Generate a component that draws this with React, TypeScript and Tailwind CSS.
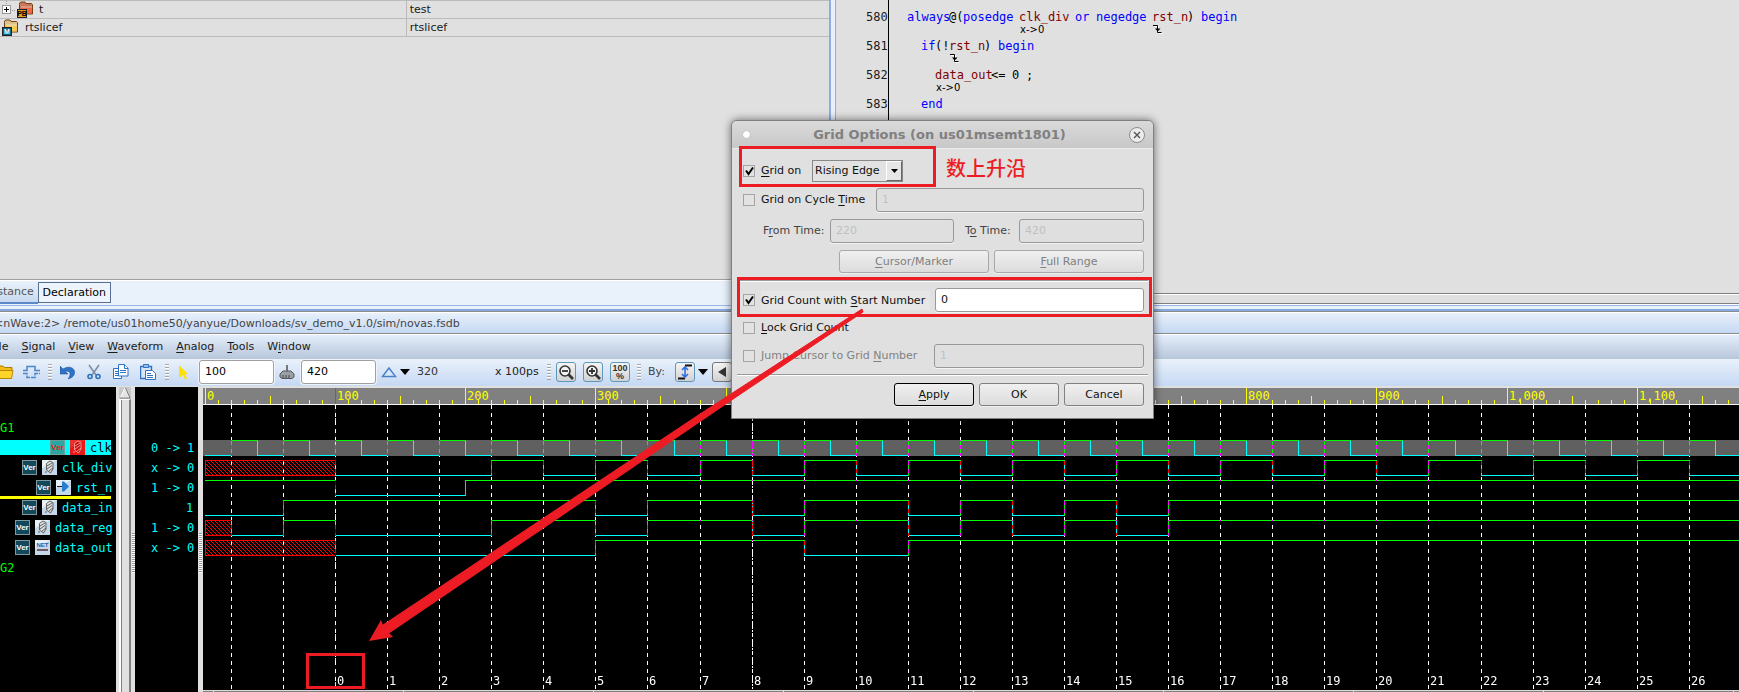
import type { ReactNode } from 'react'

type Token = { text: string; color?: string; note?: string; edge?: boolean }
type Level = 'x' | '0' | '1'
type Signal = {
  name: string
  value: string
  kind: 'reg' | 'input' | 'net'
  wave: [number, Level][]
}

const CELL = 7
const END = 1200

const codeLines: { no: number; indent: number; tokens: Token[] }[] = [
  {
    no: 580,
    indent: 0,
    tokens: [
      { text: 'always', color: 'text-[#0000ff]' },
      { text: '@(' },
      { text: 'posedge ', color: 'text-[#0000ff]' },
      { text: 'clk_div ', color: 'text-[#800000]', note: 'x->0' },
      { text: 'or ', color: 'text-[#0000ff]' },
      { text: 'negedge ', color: 'text-[#0000ff]' },
      { text: 'rst_n', color: 'text-[#800000]', edge: true },
      { text: ') ' },
      { text: 'begin', color: 'text-[#0000ff]' },
    ],
  },
  {
    no: 581,
    indent: 2,
    tokens: [
      { text: 'if', color: 'text-[#0000ff]' },
      { text: '(!' },
      { text: 'rst_n', color: 'text-[#800000]', edge: true },
      { text: ') ' },
      { text: 'begin', color: 'text-[#0000ff]' },
    ],
  },
  {
    no: 582,
    indent: 4,
    tokens: [
      { text: 'data_out', color: 'text-[#800000]', note: 'x->0' },
      { text: '<= ' },
      { text: '0 ' },
      { text: ';' },
    ],
  },
  { no: 583, indent: 2, tokens: [{ text: 'end', color: 'text-[#0000ff]' }] },
]

// level changes as [time, new level]
const clkWave: [number, Level][] = [[0, '0']]
for (let t = 20; t < END; t += 20) clkWave.push([t, (t / 20) % 2 ? '1' : '0'])

const divWave: [number, Level][] = [[0, 'x'], [100, '0']]
for (let t = 220; t < END; t += 40) divWave.push([t, ((t - 220) / 40) % 2 ? '0' : '1'])

const dataTail: [number, Level][] = [
  [300, '0'], [340, '1'], [420, '0'], [460, '1'], [540, '0'],
  [580, '1'], [620, '0'], [660, '1'], [700, '0'], [740, '1'],
]

const signals: Signal[] = [
  { name: 'clk', value: '0 -> 1', kind: 'reg', wave: clkWave },
  { name: 'clk_div', value: 'x -> 0', kind: 'reg', wave: divWave },
  { name: 'rst_n', value: '1 -> 0', kind: 'input', wave: [[0, '1'], [100, '0'], [200, '1']] },
  { name: 'data_in', value: '1', kind: 'reg', wave: [[0, '0'], [60, '1'], ...dataTail] },
  {
    name: 'data_reg',
    value: '1 -> 0',
    kind: 'reg',
    wave: [[0, 'x'], [20, '0'], [60, '1'], [100, '0'], [220, '1'], ...dataTail],
  },
  {
    name: 'data_out',
    value: 'x -> 0',
    kind: 'net',
    wave: [[0, 'x'], [100, '0'], [300, '1'], [460, '0'], [540, '1']],
  },
]

const menus = [
  ['', 'F', 'ile'],
  ['', 'S', 'ignal'],
  ['', 'V', 'iew'],
  ['', 'W', 'aveform'],
  ['', 'A', 'nalog'],
  ['', 'T', 'ools'],
  ['W', 'i', 'ndow'],
]

// time to pixel column inside the wave pane
const px = (t: number) => Math.floor(2.4 + t * 1.3017)

function Mono({ text }: { text: string }) {
  return (
    <span className="inline-block whitespace-pre font-['DejaVu_Sans_Mono',monospace] text-[12px]" style={{ width: text.length * CELL }}>
      {text}
    </span>
  )
}

/* ---------- source browser ---------- */

function FolderIcon({ tag, front, back, badge, ink }: { tag: string; front: string; back: string; badge: string; ink: string }) {
  return (
    <svg width="17" height="17" viewBox="0 0 17 17" className="shrink-0">
      <path d="M2.500 3.500V2L4 1h4l1 1.500h5.500l1 1v9.500h-13z" fill={back} stroke="#7a3f10" />
      <path d="M4 6.500h10.500v6H4z" fill={front} />
      <path d="M4 6h11" stroke="#fff" strokeOpacity=".5" />
      <rect x=".5" y="8.500" width="9" height="8" fill={badge} stroke="#222" />
      <text x="5" y="15" fontSize="7" fontWeight="bold" fill={ink} textAnchor="middle" fontFamily="Liberation Sans, sans-serif">
        {tag}
      </text>
    </svg>
  )
}

function InstanceTree() {
  return (
    <table className="w-full table-fixed border-collapse">
      <tbody>
        <tr className="h-[18px] border-y border-[#bbb]">
          <td className="w-[49%] border-r border-[#bbb] p-0">
            <div className="flex h-[17px] items-center overflow-hidden pl-[2px]">
              <svg width="15" height="17" viewBox="0 0 15 17">
                <path d="M4.500 0v4M10 9.500h4" stroke="#999" strokeDasharray="1 1" />
                <rect x=".5" y="4.500" width="8" height="8" fill="#fff" stroke="#999" />
                <path d="M2 8.500h5M4.500 6v5" stroke="#000" />
              </svg>
              <FolderIcon tag="PB" front="#ee6a45" back="#c8785a" badge="#e0a020" ink="#000" />
              <span className="pl-[5px]">t</span>
            </div>
          </td>
          <td className="p-0 pl-[3px]">test</td>
        </tr>
        <tr className="h-[18px] border-b border-[#bbb]">
          <td className="border-r border-[#bbb] p-0">
            <div className="flex h-[17px] items-center overflow-hidden pl-[2px]">
              <FolderIcon tag="M" front="#f5cc50" back="#dcc08a" badge="#0a6488" ink="#fff" />
              <span className="pl-[6px]">rtslicef</span>
            </div>
          </td>
          <td className="p-0 pl-[3px]">rtslicef</td>
        </tr>
      </tbody>
    </table>
  )
}

function SourcePane() {
  return (
    <div className="flex min-w-0 flex-col overflow-hidden">
      <div className="flex h-[293px] shrink-0">
        <div className="w-[53px] shrink-0 border-r border-black pt-[10px] pr-px text-right">
          {codeLines.map((line) => (
            <div key={line.no} className="h-[29px] leading-[14px]">
              <Mono text={String(line.no)} />
            </div>
          ))}
        </div>
        <div className="pt-[10px] pl-[18px]">
          {codeLines.map((line) => (
            <div key={line.no} className="flex h-[29px] items-start leading-[14px]">
              <Mono text={' '.repeat(line.indent)} />
              {line.tokens.map((token, i) => (
                <div key={i} className={`flex flex-col ${token.color ?? 'text-black'}`}>
                  <Mono text={token.text} />
                  {token.note && <span className="pl-px text-[10px] leading-[12px] text-black">{token.note}</span>}
                  {token.edge && (
                    <svg width="10" height="10" viewBox="0 0 10 10" className="ml-[1px]">
                      <path d="M1 2.500h4.500v7h4" fill="none" stroke="#fff" />
                      <path d="M0 1.500h4.500v7h4" fill="none" stroke="#000" />
                      <path d="M2 4.500h5.500L4.800 7.500z" />
                    </svg>
                  )}
                </div>
              ))}
            </div>
          ))}
        </div>
      </div>
      <div className="h-[11px] border-y border-[#808080] bg-[#e0e0e0] shadow-[inset_0_1px_#fff]" />
      <div className="h-px bg-white" />
    </div>
  )
}

/* ---------- toolbar ---------- */

function Grip() {
  return (
    <svg width="4" height="16" viewBox="0 0 4 16" className="shrink-0">
      <path d="M0 .5h4M0 3.500h4M0 6.500h4M0 9.500h4M0 12.500h4M0 15.500h4" stroke="#a8a8a8" />
      <path d="M0 1.500h4M0 4.500h4M0 7.500h4M0 10.500h4M0 13.500h4" stroke="#fff" />
    </svg>
  )
}

function ToolButton({ label, framed, className = '', children }: { label: string; framed?: boolean; className?: string; children: ReactNode }) {
  const frame = framed
    ? 'h-[20px] w-[20px] rounded-[3px] border border-[#5f97ba] bg-gradient-to-b from-[#f4f4f4] to-[#d2d2d2]'
    : 'h-[18px]'
  return (
    <button type="button" aria-label={label} className={`flex shrink-0 items-center justify-center ${frame} ${className}`}>
      {children}
    </button>
  )
}

function Caret() {
  return (
    <svg width="10" height="6" viewBox="0 0 10 6">
      <path d="M0 0h10L5 6z" />
    </svg>
  )
}

function Magnifier({ plus }: { plus?: boolean }) {
  return (
    <svg width="16" height="16" viewBox="0 0 16 16" fill="none" stroke="#333">
      <circle cx="7" cy="7" r="5" strokeWidth="1.600" fill="#f4f4f4" />
      <path d="M10.500 10.500l4.500 4.500" strokeWidth="2.600" />
      <path d={plus ? 'M4 7h6M7 4v6' : 'M4 7h6'} strokeWidth="1.800" />
    </svg>
  )
}

function Toolbar() {
  const field =
    'h-[24px] w-[75px] shrink-0 rounded-[3px] border border-[#a0a0a0] bg-white px-[5px] pb-[2px] text-black shadow-[0_0_0_1px_#eef4fb]'
  return (
    <div className="flex h-[27px] items-center bg-gradient-to-b from-[#eaf2fb] to-[#c5d8f3] pb-px">
      <ToolButton label="Open">
        <svg width="14" height="16" viewBox="0 0 14 16">
          <path d="M-3 2h6l1.500 1.500H12V7H-3z" fill="#f3bd12" stroke="#b07a00" />
          <path d="M-3 14.500V6.500h16l-1.500 8z" fill="#ffd428" stroke="#b88600" />
        </svg>
      </ToolButton>
      <ToolButton label="Get signals" className="ml-[9px]">
        <svg width="17" height="16" viewBox="0 0 17 16" fill="none" stroke="#4a86c6" strokeWidth="1.500">
          <path d="M0 6.500h4V2.500h8v4h5" />
          <path d="M0 9.500h4v4h8v-4h5" strokeDasharray="5 1" />
        </svg>
      </ToolButton>
      <span className="pl-[8px]"><Grip /></span>
      <ToolButton label="Undo" className="ml-[8px]">
        <svg width="15" height="15" viewBox="0 0 15 15">
          <path d="M0 1v8h8L5.500 6.500c3-1 5 .5 4.500 3.500-.2 1.500-1 2.800-2 4 4-1 7-3.500 6.500-7.500C14 2.500 8.500.5 3 4z" fill="#2f74c4" stroke="#1d56a0" strokeWidth=".6" />
        </svg>
      </ToolButton>
      <ToolButton label="Cut" className="ml-[12px]">
        <svg width="14" height="16" viewBox="0 0 14 16" fill="none">
          <path d="M2 1l7 10M12 1L5 11" stroke="#7d90aa" strokeWidth="1.600" />
          <circle cx="3" cy="12.500" r="2" stroke="#2f6fbe" strokeWidth="1.600" />
          <circle cx="11" cy="12.500" r="2" stroke="#2f6fbe" strokeWidth="1.600" />
        </svg>
      </ToolButton>
      <ToolButton label="Copy" className="ml-[12px]">
        <svg width="16" height="16" viewBox="0 0 16 16" fill="#fff" stroke="#2f74c4">
          <path d="M.5 4.500h8v10h-8z" />
          <path d="M2 7.500h4M2 9.500h4M2 11.500h4" />
          <path d="M5.500.5h6l3.500 3.500v8H5.500z" />
          <path d="M11.500.5v4H15M7 6.500h6M7 8.500h6" />
        </svg>
      </ToolButton>
      <ToolButton label="Paste" className="ml-[11px]">
        <svg width="16" height="16" viewBox="0 0 16 16" fill="#d8e6f6" stroke="#2f74c4">
          <path d="M.5 2.500h11v12H.5z" strokeWidth="1.400" />
          <path d="M3.500.5h5v3h-5z" fill="#9cc0ea" />
          <path d="M5.500 6.500h7l3 3v6h-10z" fill="#fff" />
          <path d="M7 9.500h4M7 11.500h6M7 13.500h6" />
        </svg>
      </ToolButton>
      <span className="pl-[9px]"><Grip /></span>
      <ToolButton label="Select" className="ml-[10px]">
        <svg width="10" height="16" viewBox="0 0 10 16">
          <path d="M0 1l9 9H6l2 4.500-2 1L4 11l-4 3z" fill="#ffe000" />
        </svg>
      </ToolButton>
      <input aria-label="Cursor time" defaultValue="100" className={`ml-[10px] ${field}`} />
      <ToolButton label="Marker" className="ml-[5px]">
        <svg width="16" height="16" viewBox="0 0 16 16">
          <path d="M7 1h2v7H7z" fill="#777" />
          <path d="M1 10l3-3h8l3 3v3l-2 1.500H3L1 13z" fill="#9aa0a6" stroke="#555" />
          <path d="M4 11v3M7 11v3M10 11v3" stroke="#444" />
        </svg>
      </ToolButton>
      <input aria-label="Marker time" defaultValue="420" className={`ml-[6px] ${field}`} />
      <ToolButton label="Delta" className="ml-[5px]">
        <svg width="16" height="12" viewBox="0 0 16 12">
          <path d="M1.500 10.500L8 2l6.500 8.500z" fill="#d8e8fa" stroke="#4a7fc8" strokeWidth="1.400" />
        </svg>
      </ToolButton>
      <ToolButton label="Delta menu" className="ml-[3px]"><Caret /></ToolButton>
      <span className="w-[79px] shrink-0 pl-[7px] text-[#333]">320</span>
      <span className="w-[58px] shrink-0 pl-[6px] text-[#222]">x 100ps</span>
      <Grip />
      <ToolButton label="Zoom out" framed className="ml-[5px]"><Magnifier /></ToolButton>
      <ToolButton label="Zoom in" framed className="ml-[7px]"><Magnifier plus /></ToolButton>
      <ToolButton label="Zoom to 100%" framed className="ml-[7px] flex-col font-['Liberation_Sans',sans-serif] text-[9px] leading-[8px] font-bold text-[#333]">
        <span>100</span>
        <span>%</span>
      </ToolButton>
      <span className="pl-[7px]"><Grip /></span>
      <span className="w-[34px] shrink-0 pl-[7px] text-[#444]">By:</span>
      <ToolButton label="Search by edge" framed className="bg-white">
        <svg width="16" height="16" viewBox="0 0 16 16">
          <path d="M8 1.500h7M1 14.500h7" stroke="#111" strokeWidth="2" />
          <path d="M8 4v8M5 6l3-3 3 3M5 10l3 3 3-3" stroke="#2f6fe0" strokeWidth="1.600" fill="none" />
        </svg>
      </ToolButton>
      <ToolButton label="Search menu" className="ml-[3px]"><Caret /></ToolButton>
      <ToolButton label="Previous" framed className="ml-[4px] border-[#777]">
        <svg width="9" height="10" viewBox="0 0 9 10"><path d="M8 0v10L0 5z" fill="#333" /></svg>
      </ToolButton>
    </div>
  )
}

/* ---------- wave pane ---------- */

function VerIcon({ active }: { active: boolean }) {
  return (
    <svg width="15" height="15" viewBox="0 0 15 15" className="shrink-0">
      <rect x=".5" y=".5" width="14" height="14" fill={active ? '#2aa5a0' : '#12485a'} stroke={active ? '#6f9d9a' : '#7d98a0'} />
      <text x="7.500" y="10" fontSize="8" fontWeight="bold" textAnchor="middle" fontFamily="Liberation Sans, sans-serif" fill={active ? '#f01818' : '#fff'}>
        Ver
      </text>
    </svg>
  )
}

function KindIcon({ kind, active }: { kind: Signal['kind']; active: boolean }) {
  return (
    <svg width="15" height="15" viewBox="0 0 15 15" className="shrink-0">
      <rect width="15" height="15" fill={active ? '#e81818' : '#c4d8ea'} />
      <path d="M0 0h15L0 8z" fill="#fff" fillOpacity={active ? 0.1 : 0.6} />
      {kind === 'reg' && (
        <g stroke={active ? '#ffb0a8' : '#444'} fill={active ? '#c81010' : '#ddd'} strokeWidth=".8">
          <path d="M5 3l3-2 3 1.500v6.500L8.500 13 4.500 10V3.500z" />
          <path d="M5 6l5-3M5 9l5-3.500M7 11l4-3M3 12h2" />
        </g>
      )}
      {kind === 'input' && (
        <g>
          <path d="M1 6.500h6" stroke="#222" />
          <path d="M6 1.500h2l5 5-5 5H6z" fill="#2a7cd0" />
        </g>
      )}
      {kind === 'net' && (
        <g>
          <text x="7.500" y="7" fontSize="6" fontWeight="bold" textAnchor="middle" fill="#2a62b0" fontFamily="Liberation Sans, sans-serif">NET</text>
          <path d="M2 10h11" stroke="#5a3038" strokeWidth="1.500" />
        </g>
      )}
    </svg>
  )
}

function SignalList() {
  return (
    <div className="w-[116px] shrink-0 overflow-hidden bg-black pr-[5px] text-[#00ffff]">
      <div className="mt-[33px] h-[20px] leading-[16px] text-[#00ff00]"><Mono text="G1" /></div>
      {signals.map((signal, i) => (
        <div key={signal.name} className="h-[20px]">
          <div className={`flex h-[15px] justify-end gap-[5px] leading-[17px] ${i === 0 ? 'bg-[#00ffff] text-black' : ''}`}>
            <VerIcon active={i === 0} />
            <KindIcon kind={signal.kind} active={i === 0} />
            <Mono text={signal.name} />
          </div>
          {/* insertion marker */}
          {signal.name === 'rst_n' && <div className="mt-[1px] h-[3px] bg-[#ffff00]" />}
        </div>
      ))}
      <div className="leading-[16px] text-[#00ff00]"><Mono text="G2" /></div>
    </div>
  )
}

function SplitterGrip() {
  return (
    <div className="mt-[146px] h-[40px] w-[3px] bg-[repeating-linear-gradient(#999_0_1px,#fff_1px_2px)]" />
  )
}

function tracePath(wave: Signal['wave'], level: Level, top: number) {
  let d = ''
  wave.forEach(([start, value], i) => {
    if (value !== level) return
    const from = px(start)
    const to = px(wave[i + 1]?.[0] ?? 2 * END)
    const y = (value === '1' ? top : top + 15) + 0.5
    // the edge takes the colour of the level it arrives at
    if (i > 0) d += `M${from + 0.5} ${top}v16`
    d += `M${from} ${y}H${to + 1}`
  })
  return d
}

function Ruler() {
  const ticks = []
  for (let t = 0; t < END; t += 10) ticks.push(t)
  return (
    <svg className="block h-[16px] w-full bg-[#808080]">
      {ticks.map((t) => (
        <rect key={t} x={px(t)} y={t % 100 === 0 ? 0 : t % 50 === 0 ? 8 : 12} width="1" height="16" fill={t === 100 ? '#666' : '#ffff00'} />
      ))}
      {ticks.filter((t) => t % 100 === 0).map((t) => (
        <text key={t} x={px(t) + 2} y="12" fill="#ffff00" fontSize="12" fontFamily="DejaVu Sans Mono, monospace">
          {t.toLocaleString('en-US')}
        </text>
      ))}
    </svg>
  )
}

function Waves() {
  const grid = []
  for (let t = 20; t < END; t += 40) grid.push(t)
  return (
    <svg className="isolate block h-[285px] w-full bg-black">
      <defs>
        <pattern id="unknown" width="4" height="4" patternUnits="userSpaceOnUse">
          <path d="M-1 -1l6 6M-1 3l2 2M3 -1l2 2" stroke="#ff0000" strokeWidth="1" />
        </pattern>
      </defs>
      <rect y="35" width="100%" height="16" fill="#606060" />
      {signals.map((signal, i) => {
        const top = 35 + i * 20
        return (
          <g key={signal.name} fill="none" shapeRendering="crispEdges">
            {signal.wave[0][1] === 'x' && (
              <rect x="2.500" y={top + 0.5} width={px(signal.wave[1][0]) - 2} height="15" fill="url(#unknown)" stroke="#ff0000" />
            )}
            <path d={tracePath(signal.wave, '0', top)} stroke="#00ffff" />
            <path d={tracePath(signal.wave, '1', top)} stroke="#00ff00" />
          </g>
        )
      })}
      <g className="mix-blend-difference">
        {grid.map((t) => (
          <path
            key={t}
            d={`M${px(t) + 0.5} 0V284`}
            stroke="#fff"
            strokeDasharray={t === 420 ? '8 1 2 1 4 2' : '4 4'}
          />
        ))}
      </g>
      {/* main cursor */}
      <path d={`M${px(100) + 0.5} 0V284`} stroke="#0000ff" strokeDasharray="4 20" strokeDashoffset="-4" />
      <path d={`M${px(100) + 0.5} 0V284`} stroke="#ffff00" strokeDasharray="3 21" strokeDashoffset="-13" />
      {grid.filter((t) => t >= 100).map((t) => (
        <text key={t} x={px(t) + 2} y="280" fill="#fff" fontSize="12" fontFamily="DejaVu Sans Mono, monospace">
          {(t - 100) / 40}
        </text>
      ))}
    </svg>
  )
}

function WavePane() {
  return (
    <div className="flex grow">
      <SignalList />
      <div className="flex w-[19px] shrink-0 justify-between pl-[3px]">
        <div className="flex w-[12px] flex-col">
          <svg width="12" height="12" viewBox="0 0 12 12">
            <rect width="12" height="12" fill="#c8c8c8" />
            <path d="M1.500 10.500L6 1l4.500 9.500z" fill="#e4e4e4" stroke="#fff" />
            <path d="M1 11h10L6.500 1" fill="none" stroke="#777" />
          </svg>
          <div className="grow border-x-2 border-t border-r-[#808080] border-l-white border-t-white bg-[#e0e0e0] shadow-[inset_1px_0_#808080]" />
        </div>
        <SplitterGrip />
      </div>
      <div className="w-[63px] shrink-0 overflow-hidden bg-black pt-[53px] pr-[5px] text-right text-[#00ffff]">
        {signals.map((signal) => (
          <div key={signal.name} className="h-[20px] leading-[17px]"><Mono text={signal.value} /></div>
        ))}
      </div>
      <div className="flex w-[5px] shrink-0 justify-center"><SplitterGrip /></div>
      <div className="min-w-0 grow overflow-hidden pt-px">
        <Ruler />
        <div className="h-px bg-[#f4f4f4]" />
        <Waves />
        <div className="h-px bg-[#d8d8d8]" />
        <div className="h-px bg-[repeating-linear-gradient(90deg,#808080_0_10px,#ffff00_10px_11px,#808080_11px_190px)]" />
      </div>
    </div>
  )
}

/* ---------- grid options dialog ---------- */

function CheckBox({ id, checked, disabled }: { id: string; checked?: boolean; disabled?: boolean }) {
  return (
    <span className="mr-[6px] grid shrink-0">
      <input
        id={id}
        type="checkbox"
        defaultChecked={checked}
        disabled={disabled}
        className="peer h-[12px] w-[12px] appearance-none border border-[#a4a4a4] bg-[#e2e2e2] [grid-area:1/1]"
      />
      <svg viewBox="0 0 12 12" className="pointer-events-none invisible h-[12px] w-[12px] [grid-area:1/1] peer-checked:visible">
        <path d="M3 5.500l2.500 3.500L10 2.500" fill="none" stroke="#000" strokeWidth="2" />
      </svg>
    </span>
  )
}

function GridOptions() {
  const field = 'h-full rounded-[3px] border border-[#989898] px-[5px] pb-[2px] shadow-[0_1px_#f4f4f4] disabled:bg-[#dfdfdf] disabled:text-[#c0c0c0]'
  const button = 'h-[23px] rounded-[3px] border bg-gradient-to-b from-[#f0f0f0] to-[#dcdcdc] shadow-[0_1px_#f0f0f0]'
  const u = 'underline underline-offset-2'
  return (
    <div
      role="dialog"
      aria-labelledby="grid-title"
      className="absolute top-[120px] left-[731px] w-[423px] rounded-t-[6px] border border-[#808080] bg-[#e0e0e0] whitespace-nowrap text-[#111] shadow-[0_0_8px_rgba(0,0,0,0.55)]"
    >
      <div className="flex h-[28px] items-center justify-between rounded-t-[5px] border-b border-[#ececec] bg-gradient-to-b from-[#dadada] to-[#c8c8c8] pr-[8px] pl-[11px]">
        <span className="h-[7px] w-[7px] rounded-full bg-white shadow-[0_0_1px_#888]" />
        <h2 id="grid-title" className="text-[13px] font-bold text-[#808080]">Grid Options (on us01msemt1801)</h2>
        <button type="button" aria-label="Close" className="flex h-[16px] w-[16px] items-center justify-center rounded-full border border-[#8c8c8c] bg-[#ececec]">
          <svg width="8" height="8" viewBox="0 0 8 8"><path d="M1 1l6 6M7 1L1 7" stroke="#555" strokeWidth="1.400" /></svg>
        </button>
      </div>
      <form className="flex flex-col pt-[11px] pr-[9px] pb-[12px] pl-[11px]">
        <div className="flex h-[22px] items-center">
          <CheckBox id="grid-on" checked />
          <label htmlFor="grid-on" className="w-[51px] shrink-0"><span className={u}>G</span>rid on</label>
          <span className="grid h-full w-[91px]">
            <select aria-label="Edge" className="appearance-none border border-[#888] bg-[#e2e2e2] pl-[2px] [grid-area:1/1]">
              <option>Rising Edge</option>
              <option>Falling Edge</option>
            </select>
            <span className="pointer-events-none m-[1px] flex w-[16px] items-center justify-center justify-self-end border border-t-white border-r-[#666] border-b-[#666] border-l-white bg-[#e6e6e6] [grid-area:1/1]">
              <svg width="7" height="4" viewBox="0 0 7 4"><path d="M0 0h7L3.500 4z" /></svg>
            </span>
          </span>
        </div>
        <div className="mt-[6px] flex h-[24px] items-center">
          <CheckBox id="cycle" />
          <label htmlFor="cycle" className="w-[115px] shrink-0">Grid on Cycle <span className={u}>T</span>ime</label>
          <input aria-label="Cycle time" disabled defaultValue="1" className={`w-0 grow ${field}`} />
        </div>
        <div className="mt-[7px] flex h-[24px] items-center pl-[20px] text-[#444]">
          <label htmlFor="from" className="w-[67px] shrink-0">F<span className={u}>r</span>om Time:</label>
          <input id="from" disabled defaultValue="220" className={`w-[124px] shrink-0 ${field}`} />
          <label htmlFor="to" className="w-[65px] shrink-0 pl-[11px]">T<span className={u}>o</span> Time:</label>
          <input id="to" disabled defaultValue="420" className={`w-0 grow ${field}`} />
        </div>
        <div className="mt-[7px] flex gap-[5px] pl-[96px] text-[#808080]">
          <button type="button" disabled className={`grow basis-0 border-[#a8a8a8] ${button}`}><span className={u}>C</span>ursor/Marker</button>
          <button type="button" disabled className={`grow basis-0 border-[#a8a8a8] ${button}`}><span className={u}>F</span>ull Range</button>
        </div>
        <div className="mt-[7px] -mr-[4px] -ml-[6px] h-[2px] border-t border-[#999] bg-white" />
        <div className="mt-[6px] flex h-[24px] items-center">
          <CheckBox id="count" checked />
          <label htmlFor="count" className="mr-[5px] w-[169px] shrink-0 bg-[#e6e6e6] leading-[19px]">Grid Count with <span className={u}>S</span>tart Number</label>
          <input aria-label="Start number" defaultValue="0" className={`w-0 grow bg-white ${field}`} />
        </div>
        <div className="flex h-[32px] items-center">
          <CheckBox id="lock" />
          <label htmlFor="lock"><span className={u}>L</span>ock Grid Count</label>
        </div>
        <div className="flex h-[24px] items-center text-[#808080]">
          <CheckBox id="jump" disabled />
          <label htmlFor="jump" className="w-[173px] shrink-0">Jump Cursor to Grid <span className={u}>N</span>umber</label>
          <input aria-label="Grid number" disabled defaultValue="1" className={`w-0 grow ${field}`} />
        </div>
        <div className="mt-[6px] -mr-[4px] -ml-[6px] h-[2px] border-t border-[#999] bg-white" />
        <div className="mt-[7px] flex justify-end gap-[5px]">
          <button type="button" className={`w-[80px] border-black ${button}`}><span className={u}>A</span>pply</button>
          <button type="button" className={`w-[80px] border-[#808080] ${button}`}>OK</button>
          <button type="button" className={`w-[80px] border-[#808080] ${button}`}>Cancel</button>
        </div>
      </form>
    </div>
  )
}

function Annotations() {
  return (
    <svg className="pointer-events-none absolute inset-0 h-full w-full">
      <g fill="none" stroke="#ed1c24" strokeWidth="3">
        <rect x="740.500" y="147.500" width="194" height="38" />
        <rect x="738.500" y="278.500" width="412" height="37" />
        <rect x="307.500" y="654.500" width="56" height="33" />
      </g>
      <path d="M383 625l-2-5-12 21 24-4-4-4z" fill="#ed1c24" />
      <path d="M862 309L700 414 383 625l6 8L742 393l121-81z" fill="#ed1c24" stroke="#ed1c24" strokeLinejoin="round" />
      <text x="946" y="176" fontSize="20" fontWeight="500" fill="#ed1c24" fontFamily="Noto Sans CJK SC, sans-serif">
        数上升沿
      </text>
    </svg>
  )
}

export default function App() {
  return (
    <div className="relative flex min-h-screen flex-col overflow-hidden bg-[#e0e0e0] font-['DejaVu_Sans',sans-serif] text-[11px] leading-[14px] text-[#1a1a1a]">
      <div className="grid h-[305px] grid-cols-[836fr_903fr]">
        <div className="flex min-w-0 flex-col">
          <div className="flex h-[279px]">
            <div className="grow"><InstanceTree /></div>
            <div className="w-[7px] shrink-0 border-r border-l border-r-[#8fb0e4] border-l-[#a8a8a8] bg-[#e8f0fa] shadow-[inset_1px_0_#8fb0e4]" />
          </div>
          <div className="flex h-[26px] items-start border-t border-[#a0a0a0] bg-[#e9f1fa] pt-[2px] shadow-[inset_0_1px_#fff]">
            <button type="button" className="-ml-[13px] h-[22px] border-b-2 border-[#5a88c8] bg-gradient-to-b from-[#e9f1fa] to-[#c8daf0] pr-[4px] text-[#555]">
              Instance
            </button>
            <button type="button" className="h-[21px] w-[73px] border border-[#5a6f94] bg-[#eef4fb] text-black">Declaration</button>
          </div>
        </div>
        <SourcePane />
      </div>
      <div className="h-[6px] border-t border-b-2 border-t-[#9ab6e6] border-b-[#86a8e0] bg-[#e9f1fa]" />
      <div className="h-[23px] overflow-hidden border-y border-[#8c8c8c] bg-gradient-to-b from-[#eaf2fb] to-[#c5d8f3] -indent-[6px] leading-[23px] whitespace-nowrap text-[#444] shadow-[inset_0_1px_#fff]">
        &lt;nWave:2&gt; /remote/us01home50/yanyue/Downloads/sv_demo_v1.0/sim/novas.fsdb
      </div>
      <nav className="flex h-[25px] items-center gap-[13px] bg-gradient-to-b from-[#e6f0fd] to-[#b7c6da] shadow-[inset_0_1px_#fff]">
        {menus.map(([pre, key, rest]) => (
          <button key={key} type="button" className="first:-ml-[10px]">
            {pre}<span className="underline underline-offset-2">{key}</span>{rest}
          </button>
        ))}
      </nav>
      <Toolbar />
      <div className="h-px bg-[#e0e0e0]" />
      <WavePane />
      <GridOptions />
      <Annotations />
    </div>
  )
}
